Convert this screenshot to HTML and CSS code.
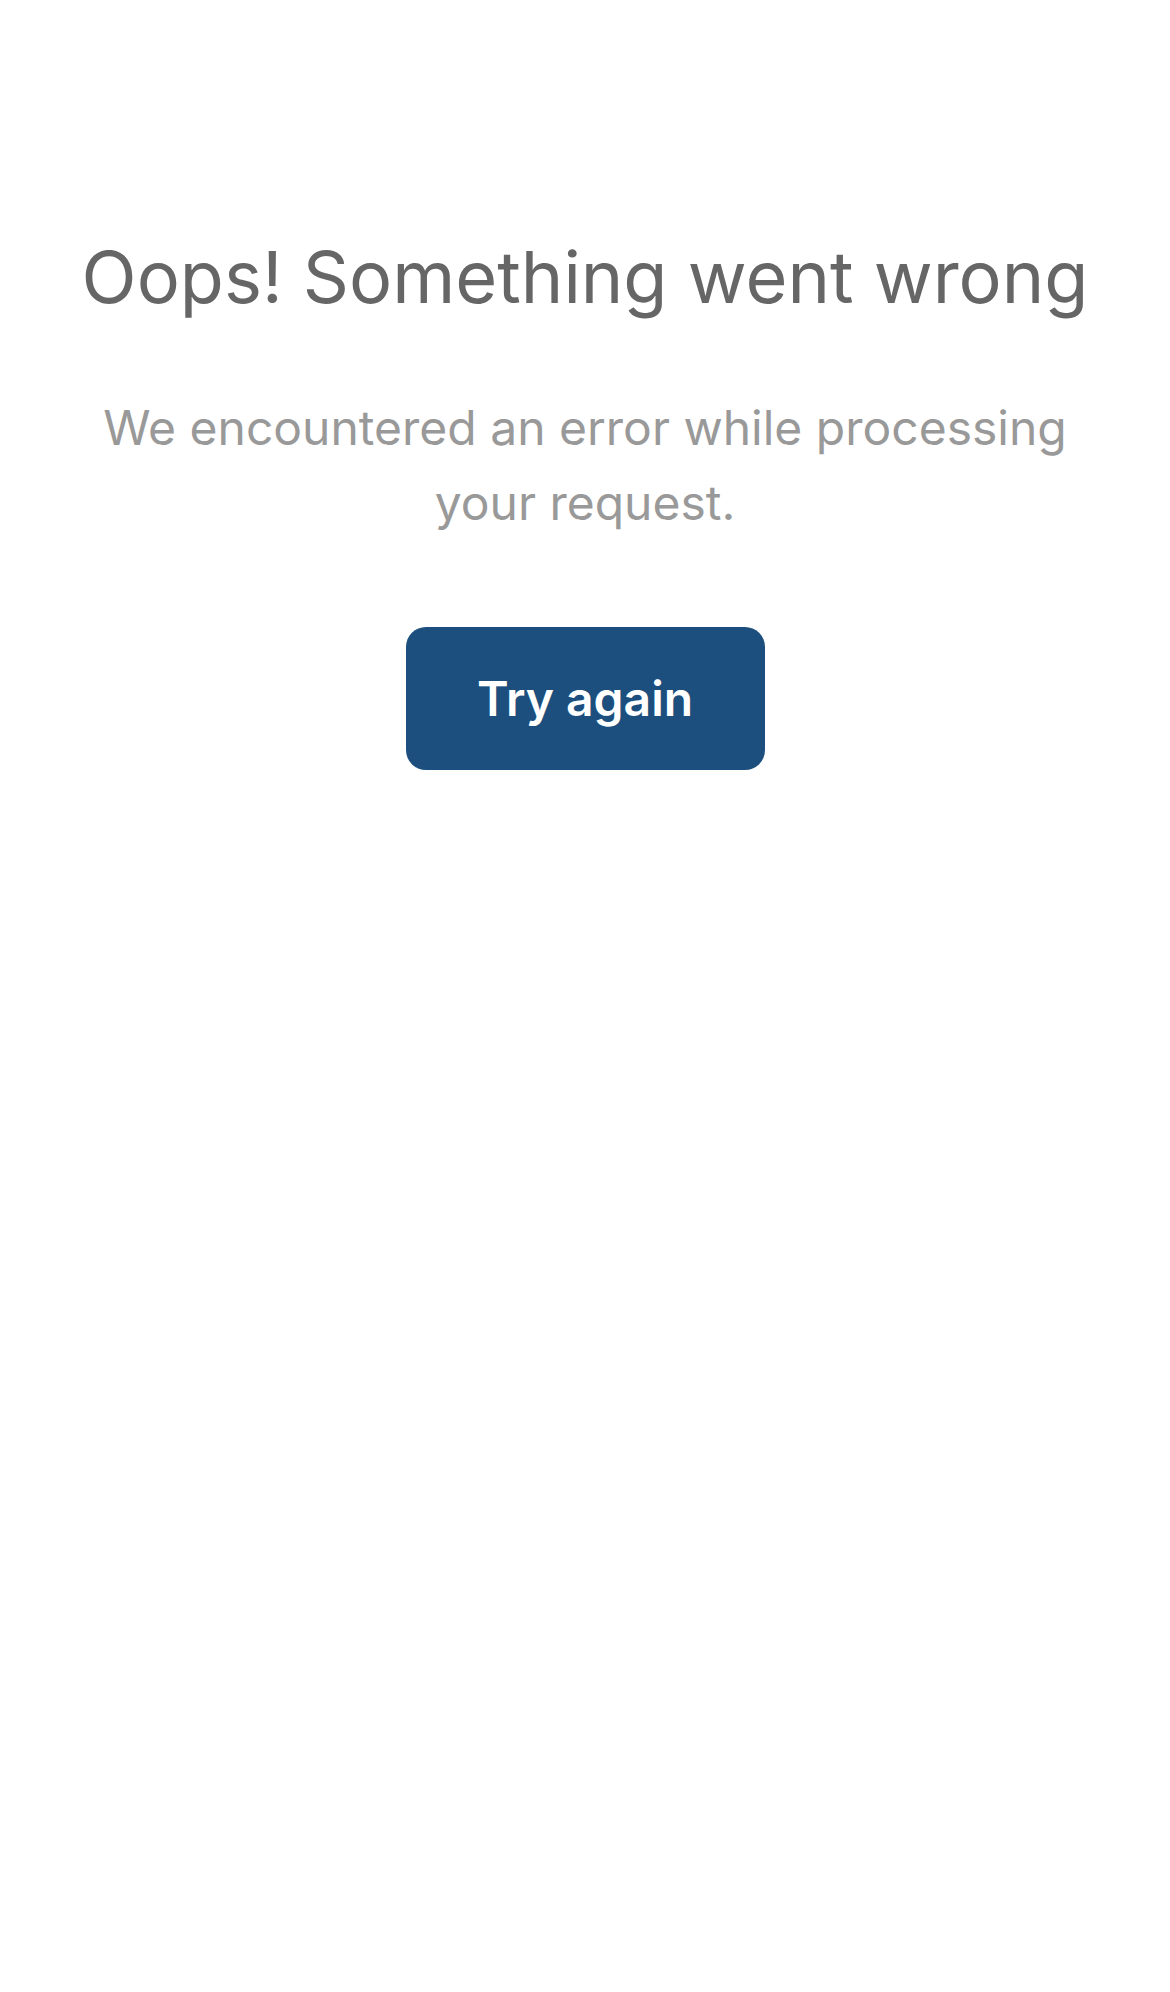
FILE: index.html
```html
<!DOCTYPE html>
<html lang="en">
<head>
<meta charset="utf-8">
<title>Error</title>
<link rel="stylesheet" href="styles.css">
</head>
<body>
<main class="error">
  <h1 class="error-title">Oops! Something went wrong</h1>
  <p class="error-text">We encountered an error while processing your request.</p>
  <button class="error-button" type="button">Try again</button>
</main>
</body>
</html>
```
FILE: styles.css
```css
html, body {
  margin: 0;
  padding: 0;
  background: #ffffff;
}
body {
  font-family: Inter, "Noto Sans", sans-serif;
}
.error {
  display: flex;
  flex-direction: column;
  align-items: center;
  text-align: center;
  padding: 234px 60px 0;
}
.error-title {
  margin: 0;
  font-size: 72px;
  font-weight: 400;
  line-height: 1.2;
  color: #666666;
}
.error-text {
  margin: 70px 0 0;
  max-width: 980px;
  font-size: 48px;
  font-weight: 400;
  line-height: 75px;
  color: #999999;
}
.error-button {
  margin-top: 87px;
  width: 359px;
  height: 143px;
  border: none;
  border-radius: 20px;
  background: #1c4f7e;
  color: #ffffff;
  font-family: Inter, "Noto Sans", sans-serif;
  font-size: 48px;
  font-weight: 600;
  cursor: pointer;
}
```
